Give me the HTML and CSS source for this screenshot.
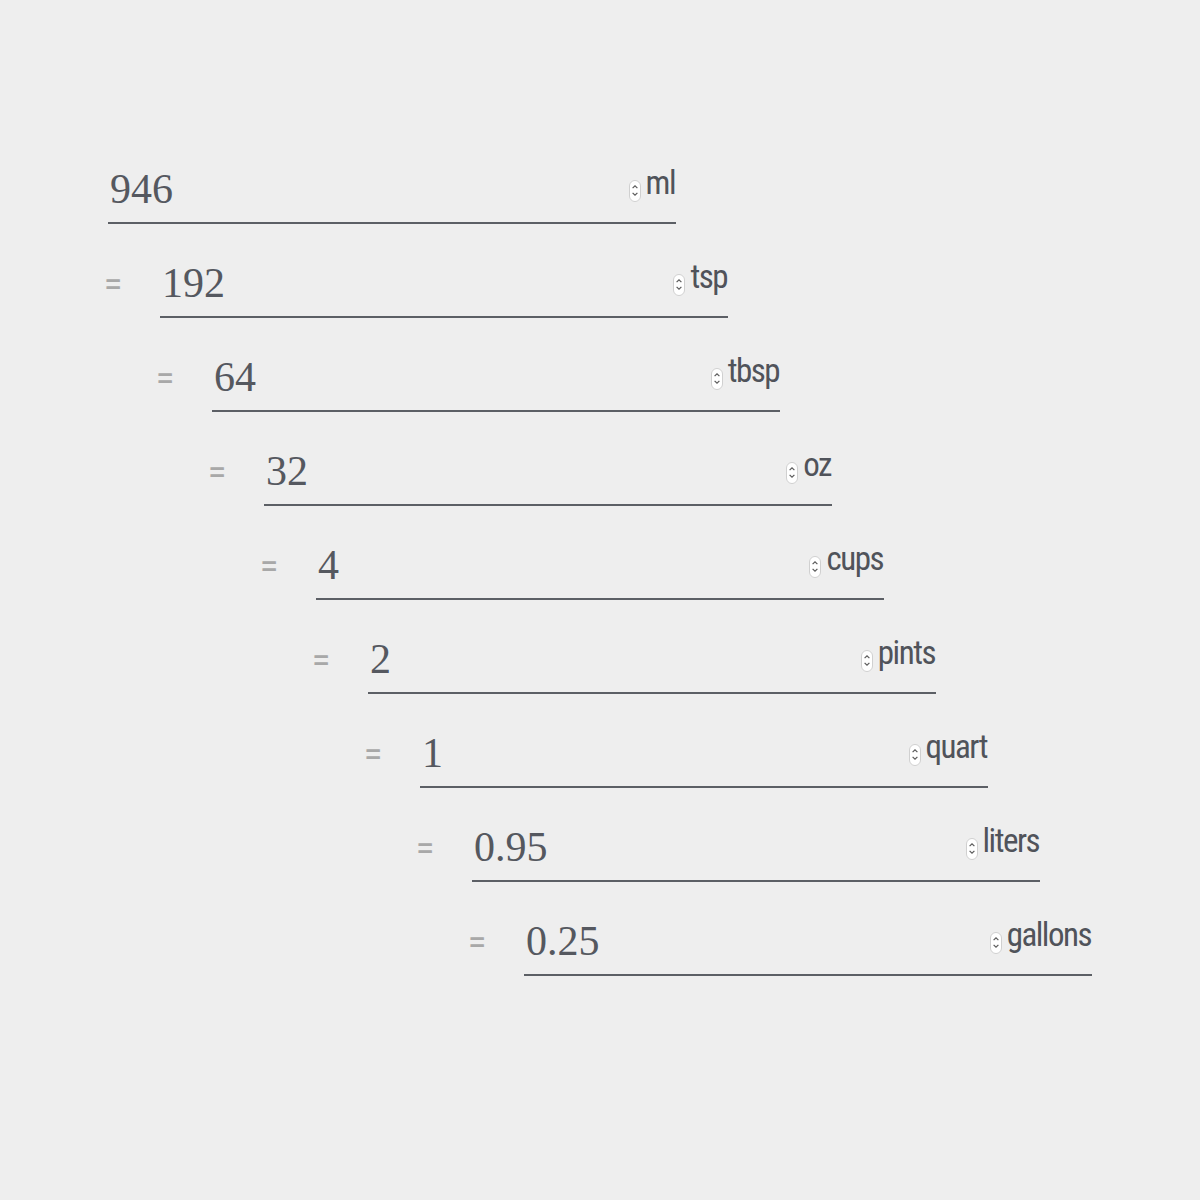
FILE: index.html
```html
<!DOCTYPE html>
<html>
<head>
<meta charset="utf-8">
<link rel="stylesheet" href="styles.css">
</head>
<body>
<div class="stack">
  <div class="row ind0">
    <span class="eq hidden">=</span>
    <label class="field"><input class="num" type="number" value="946"><span class="spin"><svg viewBox="0 0 12 22" width="12" height="22"><rect x="0.5" y="0.5" width="11" height="21" rx="5.5" fill="#fff" stroke="#d0d0d0"/><path d="M3.6 8.2 L6 5.8 L8.4 8.2 M3.6 12.8 L6 15.2 L8.4 12.8" fill="none" stroke="#5a5a5a" stroke-width="1.2"/></svg></span><span class="unit">ml</span></label>
  </div>
  <div class="row ind1">
    <span class="eq">=</span>
    <label class="field"><input class="num" type="number" value="192"><span class="spin"><svg viewBox="0 0 12 22" width="12" height="22"><rect x="0.5" y="0.5" width="11" height="21" rx="5.5" fill="#fff" stroke="#d0d0d0"/><path d="M3.6 8.2 L6 5.8 L8.4 8.2 M3.6 12.8 L6 15.2 L8.4 12.8" fill="none" stroke="#5a5a5a" stroke-width="1.2"/></svg></span><span class="unit">tsp</span></label>
  </div>
  <div class="row ind2">
    <span class="eq">=</span>
    <label class="field"><input class="num" type="number" value="64"><span class="spin"><svg viewBox="0 0 12 22" width="12" height="22"><rect x="0.5" y="0.5" width="11" height="21" rx="5.5" fill="#fff" stroke="#d0d0d0"/><path d="M3.6 8.2 L6 5.8 L8.4 8.2 M3.6 12.8 L6 15.2 L8.4 12.8" fill="none" stroke="#5a5a5a" stroke-width="1.2"/></svg></span><span class="unit">tbsp</span></label>
  </div>
  <div class="row ind3">
    <span class="eq">=</span>
    <label class="field"><input class="num" type="number" value="32"><span class="spin"><svg viewBox="0 0 12 22" width="12" height="22"><rect x="0.5" y="0.5" width="11" height="21" rx="5.5" fill="#fff" stroke="#d0d0d0"/><path d="M3.6 8.2 L6 5.8 L8.4 8.2 M3.6 12.8 L6 15.2 L8.4 12.8" fill="none" stroke="#5a5a5a" stroke-width="1.2"/></svg></span><span class="unit">oz</span></label>
  </div>
  <div class="row ind4">
    <span class="eq">=</span>
    <label class="field"><input class="num" type="number" value="4"><span class="spin"><svg viewBox="0 0 12 22" width="12" height="22"><rect x="0.5" y="0.5" width="11" height="21" rx="5.5" fill="#fff" stroke="#d0d0d0"/><path d="M3.6 8.2 L6 5.8 L8.4 8.2 M3.6 12.8 L6 15.2 L8.4 12.8" fill="none" stroke="#5a5a5a" stroke-width="1.2"/></svg></span><span class="unit">cups</span></label>
  </div>
  <div class="row ind5">
    <span class="eq">=</span>
    <label class="field"><input class="num" type="number" value="2"><span class="spin"><svg viewBox="0 0 12 22" width="12" height="22"><rect x="0.5" y="0.5" width="11" height="21" rx="5.5" fill="#fff" stroke="#d0d0d0"/><path d="M3.6 8.2 L6 5.8 L8.4 8.2 M3.6 12.8 L6 15.2 L8.4 12.8" fill="none" stroke="#5a5a5a" stroke-width="1.2"/></svg></span><span class="unit">pints</span></label>
  </div>
  <div class="row ind6">
    <span class="eq">=</span>
    <label class="field"><input class="num" type="number" value="1"><span class="spin"><svg viewBox="0 0 12 22" width="12" height="22"><rect x="0.5" y="0.5" width="11" height="21" rx="5.5" fill="#fff" stroke="#d0d0d0"/><path d="M3.6 8.2 L6 5.8 L8.4 8.2 M3.6 12.8 L6 15.2 L8.4 12.8" fill="none" stroke="#5a5a5a" stroke-width="1.2"/></svg></span><span class="unit">quart</span></label>
  </div>
  <div class="row ind7">
    <span class="eq">=</span>
    <label class="field"><input class="num" type="number" value="0.95"><span class="spin"><svg viewBox="0 0 12 22" width="12" height="22"><rect x="0.5" y="0.5" width="11" height="21" rx="5.5" fill="#fff" stroke="#d0d0d0"/><path d="M3.6 8.2 L6 5.8 L8.4 8.2 M3.6 12.8 L6 15.2 L8.4 12.8" fill="none" stroke="#5a5a5a" stroke-width="1.2"/></svg></span><span class="unit">liters</span></label>
  </div>
  <div class="row ind8">
    <span class="eq">=</span>
    <label class="field"><input class="num" type="number" value="0.25"><span class="spin"><svg viewBox="0 0 12 22" width="12" height="22"><rect x="0.5" y="0.5" width="11" height="21" rx="5.5" fill="#fff" stroke="#d0d0d0"/><path d="M3.6 8.2 L6 5.8 L8.4 8.2 M3.6 12.8 L6 15.2 L8.4 12.8" fill="none" stroke="#5a5a5a" stroke-width="1.2"/></svg></span><span class="unit">gallons</span></label>
  </div>
</div>
</body>
</html>
```
FILE: styles.css
```css
html, body {
  margin: 0;
  padding: 0;
  background: #eeeeee;
}
.stack {
  padding: 163px 0 0 56px;
  display: flex;
  flex-direction: column;
  gap: 33px;
}
.row {
  display: flex;
  align-items: stretch;
}
.ind0 { margin-left: 0; }
.ind1 { margin-left: 52px; }
.ind2 { margin-left: 104px; }
.ind3 { margin-left: 156px; }
.ind4 { margin-left: 208px; }
.ind5 { margin-left: 260px; }
.ind6 { margin-left: 312px; }
.ind7 { margin-left: 364px; }
.ind8 { margin-left: 416px; }
.eq {
  width: 56px;
  margin-left: -4px;
  font-family: Roboto, "DejaVu Sans", sans-serif;
  font-size: 33px;
  color: #a8a8a8;
  line-height: 1;
  padding-top: 11px;
}
.hidden { visibility: hidden; }
.field {
  width: 568px;
  height: 59px;
  display: flex;
  align-items: flex-start;
  border-bottom: 2px solid #5c5f65;
}
.num {
  flex: 1;
  min-width: 0;
  border: none;
  outline: none;
  background: transparent;
  padding: 0 0 0 2px;
  margin: 0;
  font-family: "Liberation Serif", "Times New Roman", serif;
  font-size: 42px;
  color: #55585f;
  height: 52px;
  line-height: 52px;
}
.num::-webkit-inner-spin-button,
.num::-webkit-outer-spin-button {
  -webkit-appearance: none;
  margin: 0;
}
.spin {
  display: flex;
  margin-top: 17px;
}
.spin svg {
  display: block;
}
.unit {
  font-family: "Roboto Condensed", "Liberation Sans Narrow", Roboto, sans-serif;
  font-size: 33px;
  letter-spacing: -1.5px;
  color: #50535a;
  margin-left: 5px;
  margin-right: 1px;
  line-height: 1;
  padding-top: 3px;
}
```
